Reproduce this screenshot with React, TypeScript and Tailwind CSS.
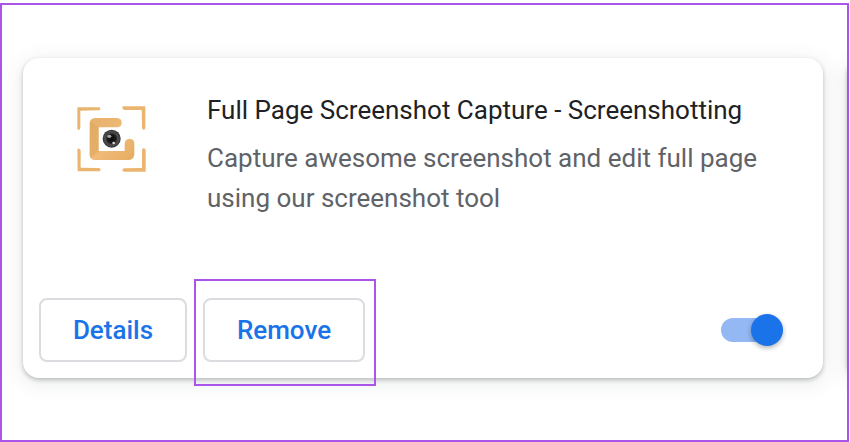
/**
 * ExtensionCard: one tile of the extensions page, with the Remove button
 * outlined as the step to follow.
 */
import { useState } from "react";

const cardShadow =
  "shadow-[0_2px_4px_0_rgba(60,64,67,0.3),0_4px_20px_2px_rgba(60,64,67,0.1)]";

function CaptureLogo() {
  return (
    <svg viewBox="27 27 216 216" className="size-[72px] shrink-0" aria-hidden="true">
      <defs>
        <linearGradient id="gold" x1="0" y1="0" x2="1" y2="1">
          <stop offset="0" stopColor="#e6b06a" />
          <stop offset="0.55" stopColor="#f0bb78" />
          <stop offset="1" stopColor="#e5ab60" />
        </linearGradient>
        <radialGradient id="lens">
          <stop offset="0" stopColor="#0b0b0b" />
          <stop offset="0.5" stopColor="#1c1c1c" />
          <stop offset="0.65" stopColor="#4a4a4a" />
          <stop offset="1" stopColor="#333333" />
        </radialGradient>
      </defs>
      <g fill="#e9b56f">
        <path d="M34 40H100Q104 41 103 46Q102 49 98 49L43 50V102Q42 108 38 108Q34 107 34 103Z" />
        <path d="M172 37H238V102Q237 107 233 107Q228 106 228 101L227 48H177Q169 47 169 42Q169 38 172 37Z" />
        <path d="M34 167Q36 162 40 164Q44 166 44 170V221L98 222Q104 224 104 228Q103 232 99 232H35Z" />
        <path d="M233 162Q238 163 239 168V233H174Q169 232 169 228Q170 224 176 223L228 222V169Q229 163 233 162Z" />
      </g>
      <path
        d="M87 72H153Q167 73 167 86Q167 99 153 100H98V171H176V148Q177 135 191 134Q205 135 205 148V181Q204 197 189 198H87Q72 197 71 182V87Q72 73 87 72Z"
        fill="url(#gold)"
      />
      <path d="M72 82L98 100V171L74 192Q71 188 71 182Z" fill="#dca55c" opacity="0.45" />
      <circle cx="137" cy="134" r="27" fill="url(#lens)" />
      <circle cx="137" cy="134" r="22" fill="none" stroke="#555555" strokeWidth="2" />
      <ellipse cx="130" cy="127" rx="6" ry="5" fill="#a6a6a6" />
      <circle cx="143" cy="147" r="4" fill="#d8d8d8" />
    </svg>
  );
}

function CardButton({ children, className }: { children: string; className: string }) {
  return (
    <button
      type="button"
      className={`h-16 rounded-lg border-2 border-[#dadce0] bg-white text-[26px] leading-10 font-medium text-[#1a73e8] ${className}`}
    >
      {children}
    </button>
  );
}

function EnableSwitch() {
  const [enabled, setEnabled] = useState(true);

  return (
    <label className="relative flex h-8 w-[62px] cursor-pointer items-center">
      <input
        type="checkbox"
        role="switch"
        aria-label="Enable extension"
        checked={enabled}
        onChange={(e) => setEnabled(e.target.checked)}
        className="peer sr-only"
      />
      <span className="h-6 w-14 rounded-full bg-[#bdc1c6] peer-checked:bg-[#94b8f3]" />
      <span className="absolute left-0 size-8 rounded-full bg-white shadow-[0_2px_5px_rgba(0,0,0,0.3)] peer-checked:left-[30px] peer-checked:bg-[#1a73e8]" />
    </label>
  );
}

export default function App() {
  return (
    <main className="bg-white pt-[3px] pr-px font-[Roboto,sans-serif]">
      <div className="flex gap-6 overflow-hidden border-2 border-[#a855e8] pt-[53px] pb-[62px] pl-[21px]">
        <article className={`flex min-w-0 flex-1 flex-col rounded-2xl bg-white px-4 pt-8 pb-4 ${cardShadow}`}>
          <div className="flex min-h-[208px] items-start gap-[60px] pr-10 pl-9">
            <div className="pt-[13px]">
              <CaptureLogo />
            </div>
            <div className="min-w-0 text-[26px]">
              <h1 className="leading-10 text-[#202124]">Full Page Screenshot Capture - Screenshotting</h1>
              <p className="mt-2 leading-10 text-[#5f6368]">
                Capture awesome screenshot and edit full page using our screenshot tool
              </p>
            </div>
          </div>

          <div className="flex items-center gap-4">
            <CardButton className="w-[148px]">Details</CardButton>
            <div className="relative">
              <CardButton className="w-[162px]">Remove</CardButton>
              <span className="pointer-events-none absolute -top-[19px] -right-[11px] -bottom-6 -left-[9px] border-2 border-[#a855e8]" />
            </div>
            <div className="mr-6 ml-auto">
              <EnableSwitch />
            </div>
          </div>
        </article>

        {/* edge of the next card in the grid */}
        <div className={`-mr-10 w-10 shrink-0 rounded-2xl bg-white ${cardShadow}`} />
      </div>
    </main>
  );
}
